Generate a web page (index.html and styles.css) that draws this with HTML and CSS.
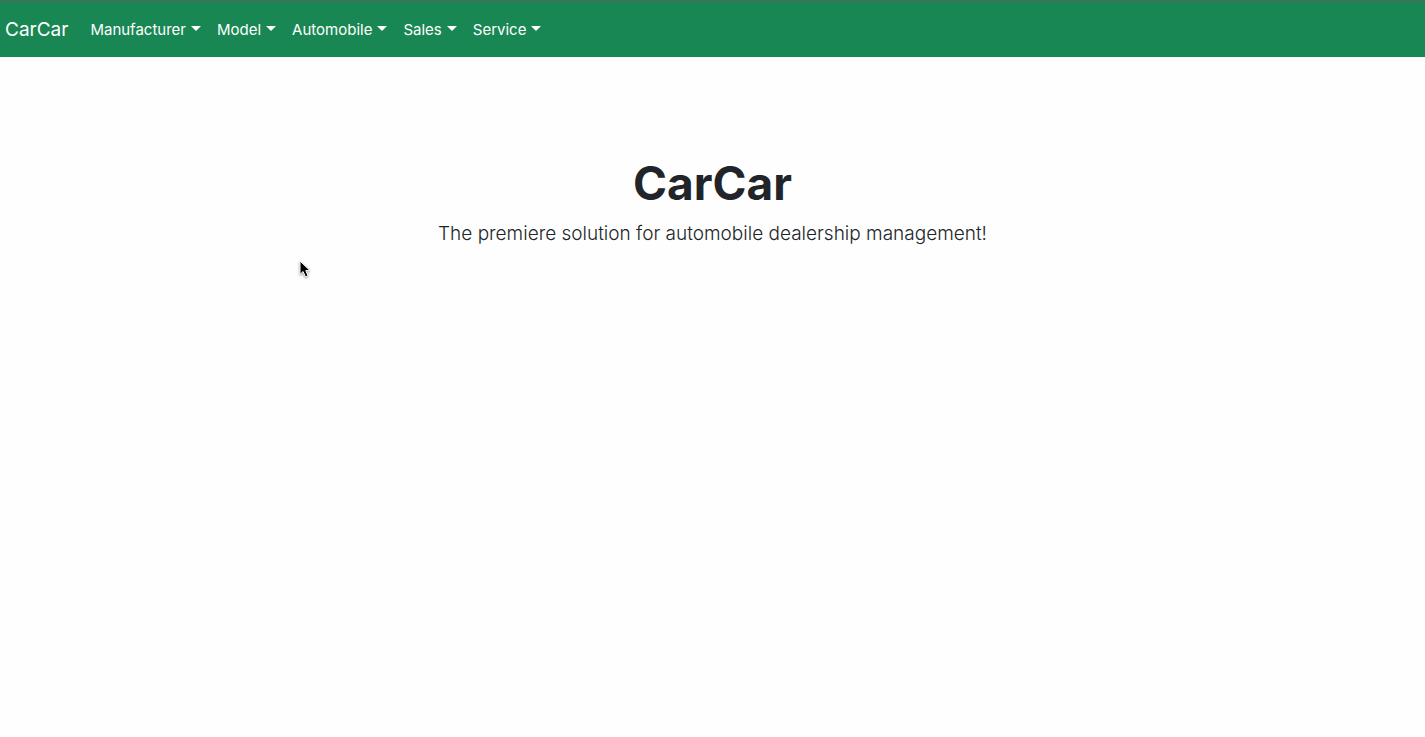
FILE: index.html
```html
<!DOCTYPE html>
<html lang="en">
<head>
<meta charset="utf-8">
<meta name="viewport" content="width=device-width, initial-scale=1">
<title>CarCar</title>
<link rel="stylesheet" href="styles.css">
</head>
<body>
<nav class="navbar">
  <a class="brand" href="#">CarCar</a>
  <ul class="menu">
    <li><a class="menu-link" href="#">Manufacturer</a></li>
    <li><a class="menu-link" href="#">Model</a></li>
    <li><a class="menu-link" href="#">Automobile</a></li>
    <li><a class="menu-link" href="#">Sales</a></li>
    <li><a class="menu-link" href="#">Service</a></li>
  </ul>
</nav>
<main class="hero">
  <h1 class="title">CarCar</h1>
  <p class="lead">The premiere solution for automobile dealership management!</p>
</main>
<svg class="pointer" width="14" height="20" viewBox="0 0 14 20" aria-hidden="true">
  <path d="M1 1V14.4L4.1 11.5L6.4 16.8L9 15.7L6.8 10.6H11Z" fill="#000" stroke="#fff" stroke-width="1"/>
</svg>
</body>
</html>
```
FILE: styles.css
```css
* { box-sizing: border-box; }
body {
  margin: 0;
  background: #fefefe;
  color: #212529;
  font-family: Inter, "Liberation Sans", sans-serif;
  font-size: 16px;
  line-height: 24px;
}
.navbar {
  display: flex;
  align-items: center;
  min-height: 57px;
  padding: 2px 0 0 5px;
  border-top: 1px solid #5f6264;
  background: #198754;
}
.brand {
  margin-right: 14px;
  color: #fff;
  font-size: 19px;
  line-height: 30px;
  text-decoration: none;
}
.menu {
  display: flex;
  margin: 0;
  padding: 0;
  list-style: none;
}
.menu-link {
  display: flex;
  align-items: center;
  gap: 5px;
  padding: 8px;
  color: #fff;
  font-size: 15px;
  text-decoration: none;
}
.menu-link::after {
  content: "";
  margin-bottom: 3px;
  border: 5px solid transparent;
  border-top-color: #fff;
  border-bottom: 0;
}
.hero {
  padding: 97px 16px 48px;
  text-align: center;
}
.title {
  margin: 0 0 8px;
  font-size: 46px;
  font-weight: 700;
  line-height: 58px;
}
.lead {
  margin: 0;
  font-size: 19px;
  font-weight: 300;
  line-height: 28px;
}
.pointer {
  position: absolute;
  left: 299px;
  top: 260px;
  filter: drop-shadow(0 1px 1px rgba(0, 0, 0, 0.4));
}
```
